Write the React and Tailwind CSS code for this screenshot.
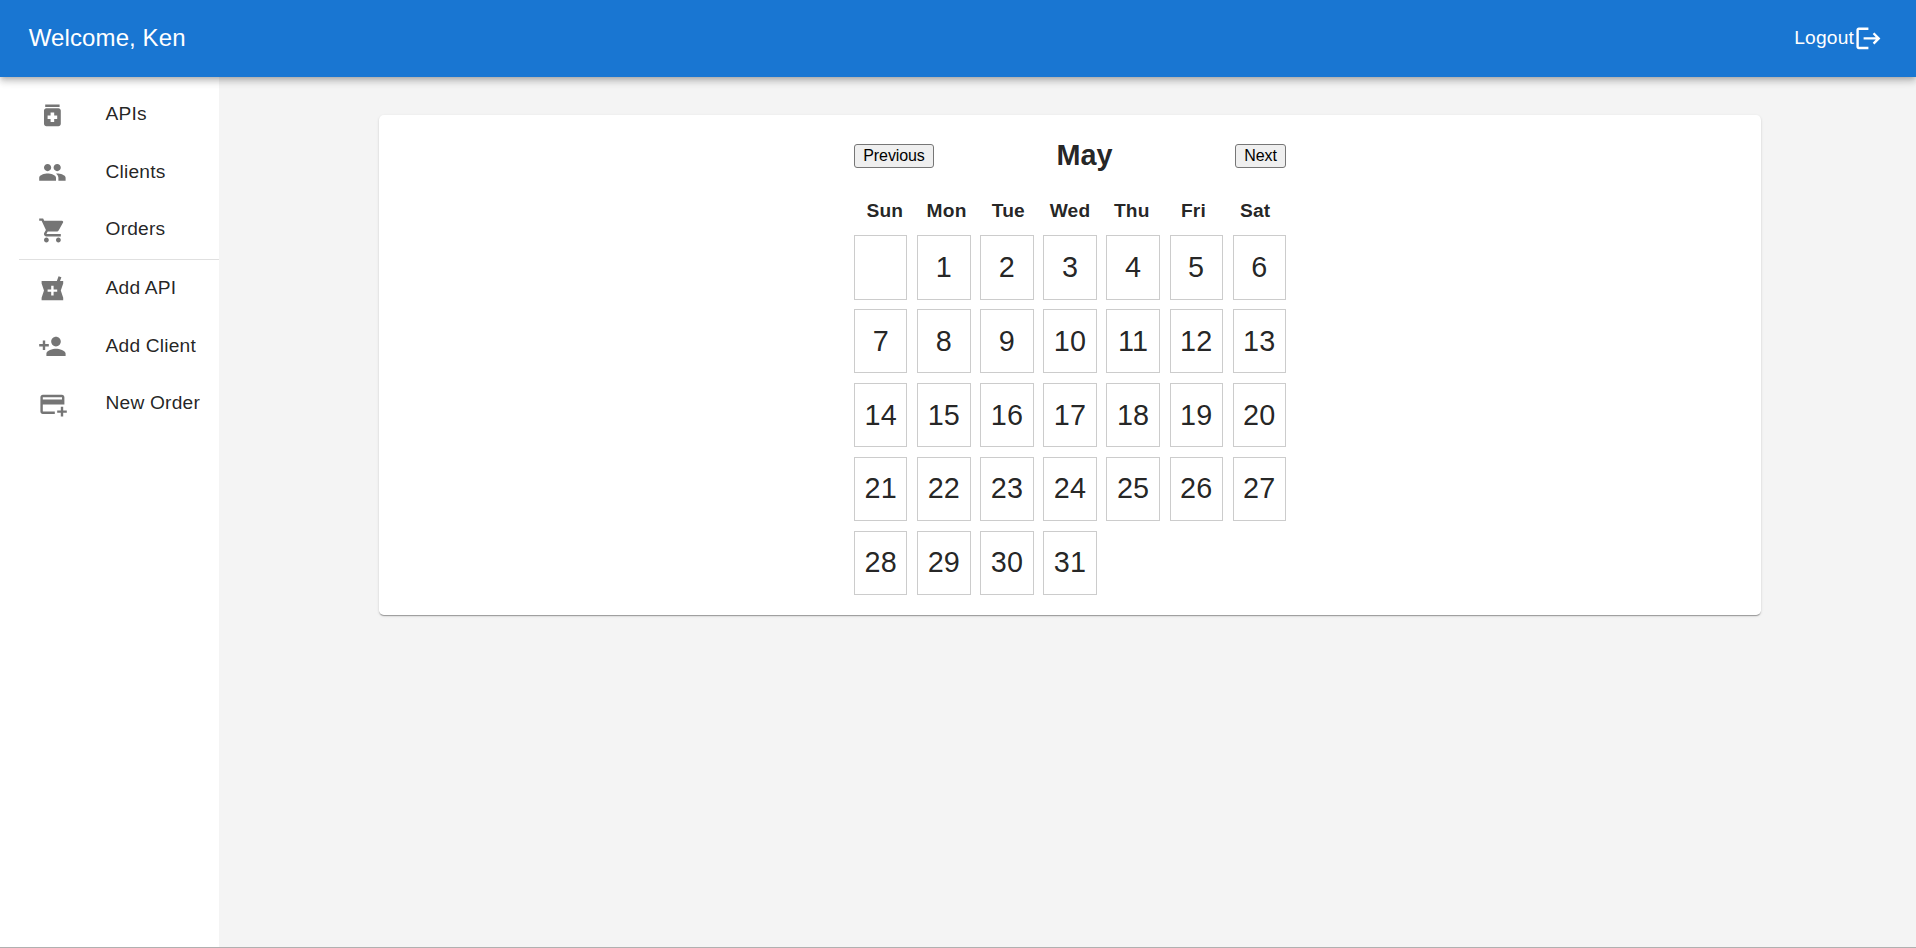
import {
  MdMedication,
  MdPeople,
  MdShoppingCart,
  MdLocalPharmacy,
  MdPersonAdd,
  MdAddCard,
  MdLogout,
} from "react-icons/md";

const primaryLinks = [
  { label: "APIs", Icon: MdMedication },
  { label: "Clients", Icon: MdPeople },
  { label: "Orders", Icon: MdShoppingCart },
];

const secondaryLinks = [
  { label: "Add API", Icon: MdLocalPharmacy },
  { label: "Add Client", Icon: MdPersonAdd },
  { label: "New Order", Icon: MdAddCard },
];

const weekdays = ["Sun", "Mon", "Tue", "Wed", "Thu", "Fri", "Sat"];
const cells = [null, ...Array.from({ length: 31 }, (_, i) => i + 1)];

function NavItem({ label, Icon }) {
  return (
    <a className="flex h-[57.6px] items-center pl-[38.4px]">
      <span className="w-[67.2px] shrink-0 text-[#757575]">
        <Icon className="size-[28.8px]" />
      </span>
      <span className="whitespace-nowrap pb-px text-[19.2px] leading-[28.8px] tracking-[0.18px]">{label}</span>
    </a>
  );
}

function MonthButton({ width, children }) {
  return (
    <button
      className={`${width} mt-px h-6 rounded-[3px] border border-[#767676] bg-[#efefef] text-center text-[16px] leading-[21px] tracking-[-0.1px] text-black`}
    >
      {children}
    </button>
  );
}

function Calendar() {
  return (
    <div className="w-[432px] tracking-[0.18px]">
      <div className="flex h-[42px] items-center justify-between">
        <MonthButton width="w-[80px]">Previous</MonthButton>
        <h2 className="text-[28.8px] font-bold leading-[42px] tracking-[0px]">May</h2>
        <MonthButton width="w-[51px]">Next</MonthButton>
      </div>
      <div className="mt-[20.6px] grid grid-cols-7 text-center text-[19.2px] font-bold leading-[28.8px]">
        {weekdays.map((day) => (
          <div key={day}>{day}</div>
        ))}
      </div>
      <div className="mt-[9.5px] grid grid-cols-7 gap-x-[9.7px] gap-y-[9.6px]">
        {cells.map((day, i) => (
          <div
            key={i}
            className="flex h-[64.3px] items-center justify-center border border-[#cccccc] text-[28.8px]"
          >
            {day}
          </div>
        ))}
      </div>
    </div>
  );
}

export default function App() {
  return (
    <div className="flex h-[948px] w-[1916px] flex-col overflow-hidden border-b border-[#b0b0b0] bg-[#f4f4f4] font-['Liberation_Sans',Arial,sans-serif] text-black/87">
      <header className="relative z-10 flex h-[76.8px] shrink-0 items-center justify-between bg-[#1976d2] pl-[28.8px] pr-[33.2px] text-white shadow-[0_2.4px_4.8px_-1.2px_rgba(0,0,0,0.2),0_4.8px_6px_0_rgba(0,0,0,0.14),0_1.2px_12px_0_rgba(0,0,0,0.12)]">
        <h1 className="text-[24px] leading-[38.4px] tracking-[0.1px]">Welcome, Ken</h1>
        <button className="flex items-center text-[19.2px] leading-[28.8px] tracking-[0.18px]">
          Logout
          <MdLogout className="size-[28.8px]" />
        </button>
      </header>
      <div className="flex flex-1">
        <nav className="w-[219px] shrink-0 bg-white pt-[9.6px]">
          {primaryLinks.map((link) => (
            <NavItem key={link.label} {...link} />
          ))}
          <hr className="ml-[19.2px] border-t border-black/12" />
          {secondaryLinks.map((link) => (
            <NavItem key={link.label} {...link} />
          ))}
        </nav>
        <main className="flex-1 pl-[159.85px] pt-[38.4px]">
          <section className="flex h-[499.4px] w-[1382.4px] justify-center rounded-[4.8px] bg-white pt-[19.2px] shadow-[0_2px_1px_-1px_rgba(0,0,0,0.2),0_1px_1px_0_rgba(0,0,0,0.14),0_1px_3px_0_rgba(0,0,0,0.12)]">
            <Calendar />
          </section>
        </main>
      </div>
    </div>
  );
}
